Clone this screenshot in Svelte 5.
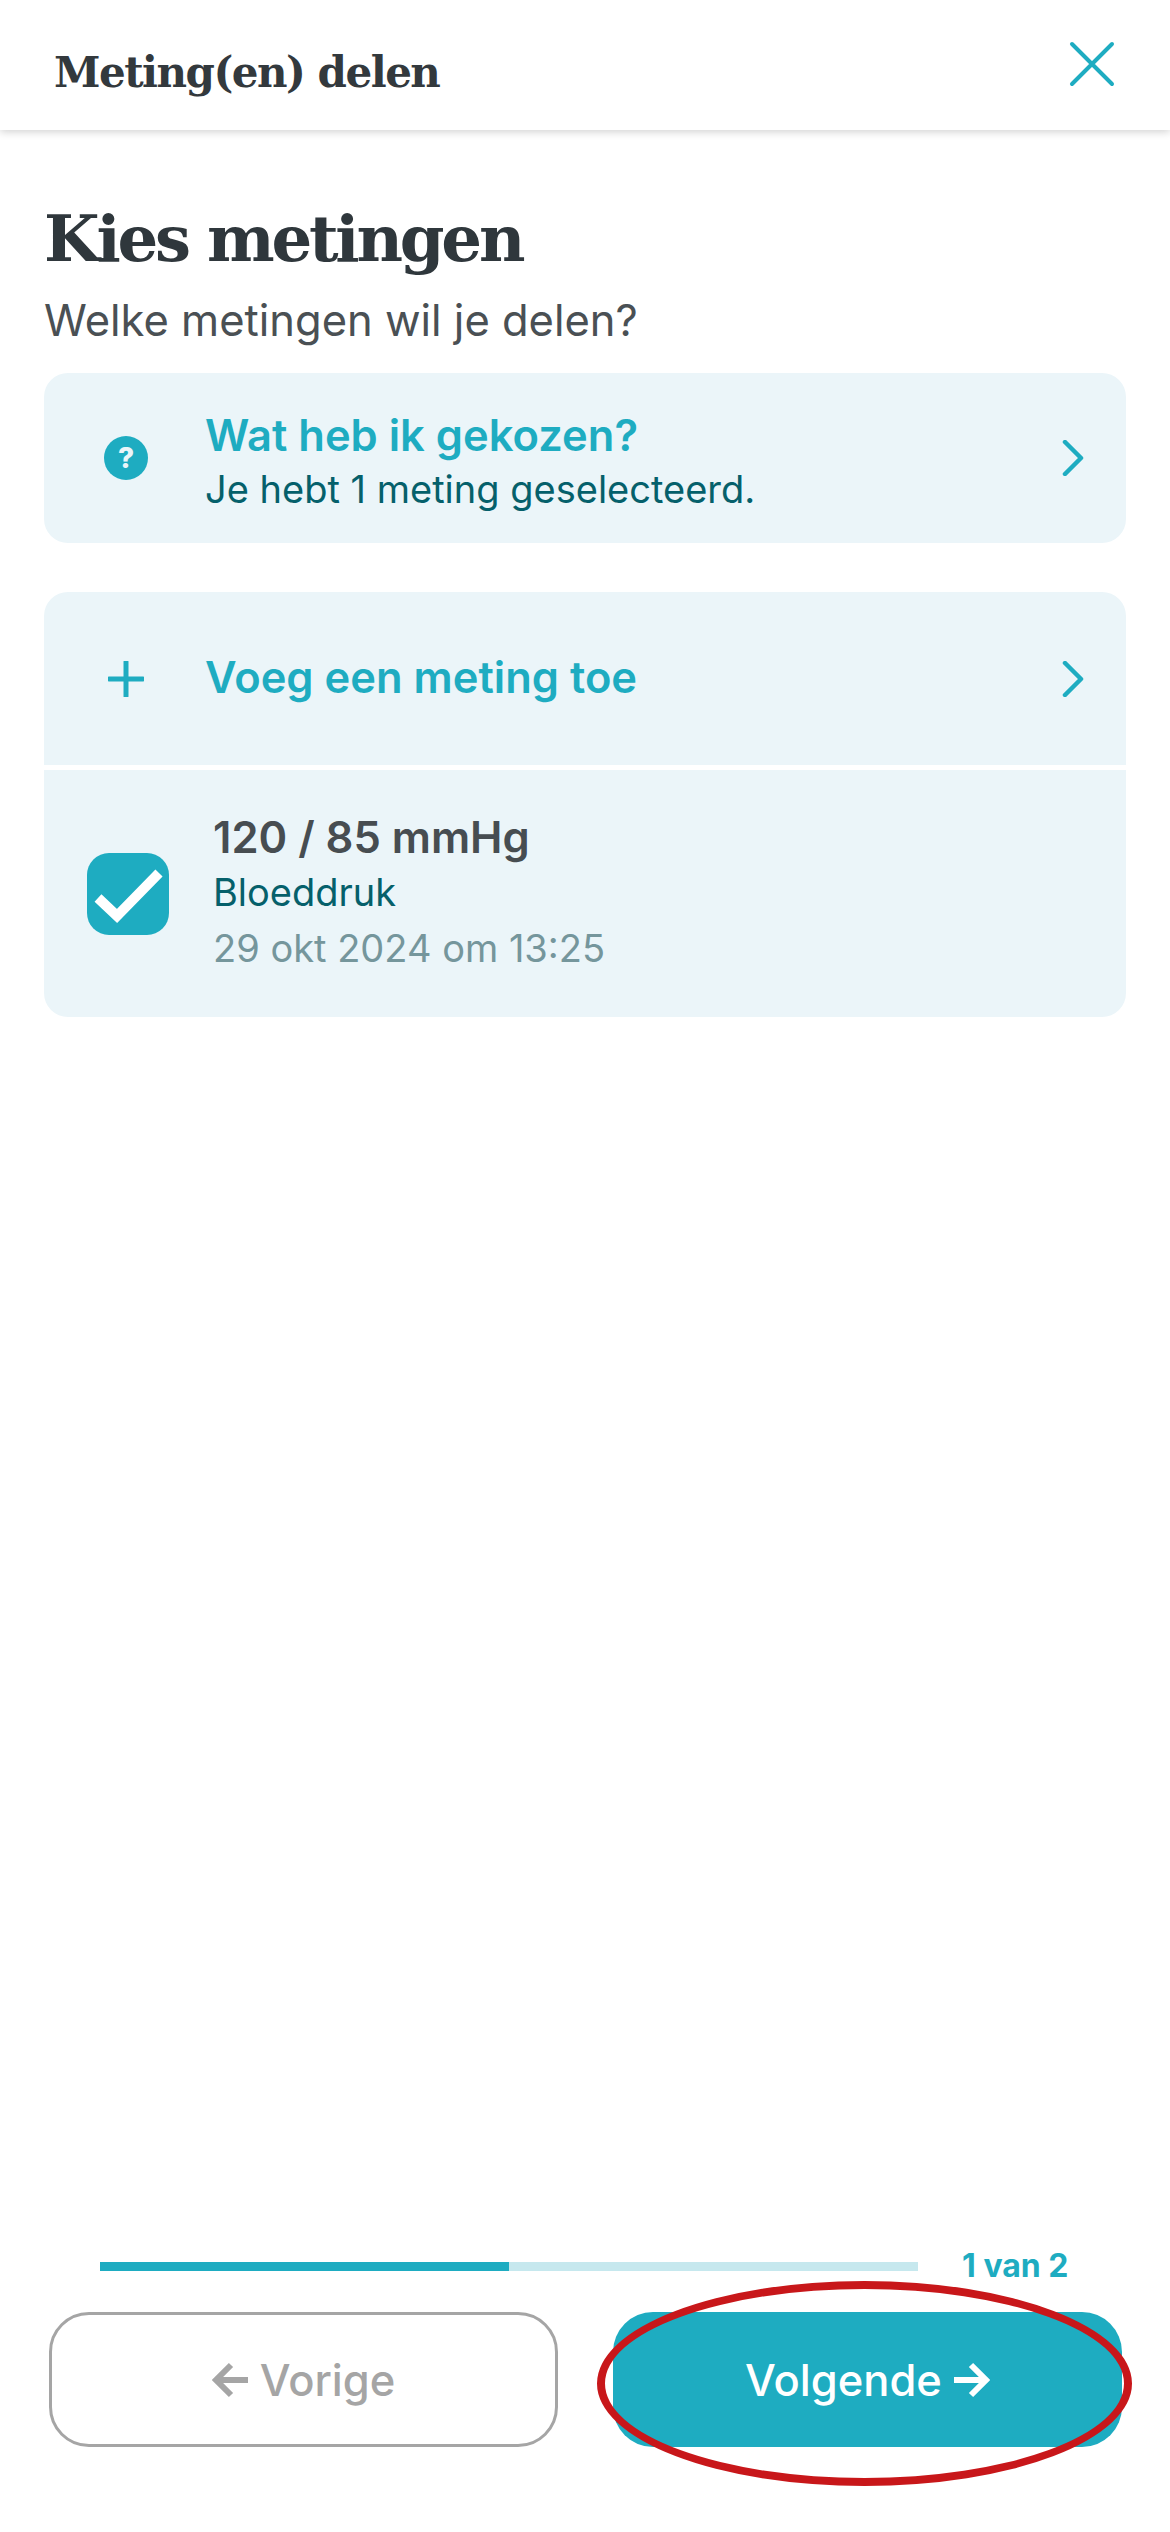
<script>
	const progress = 50;
</script>

<div class="screen">
	<header class="topbar">
		<h2>Meting(en) delen</h2>
		<button class="close" aria-label="Sluiten">
			<svg viewBox="0 0 46 46" width="46" height="46">
				<path d="M3 3 L43 43 M43 3 L3 43" fill="none" stroke="#1eacc1" stroke-width="4" stroke-linecap="round" />
			</svg>
		</button>
	</header>

	<main class="content">
		<h1>Kies metingen</h1>
		<p class="lead">Welke metingen wil je delen?</p>

		<div class="card summary">
			<span class="icon">
				<span class="help">?</span>
			</span>
			<div class="summary-text">
				<div class="link-title">Wat heb ik gekozen?</div>
				<div class="summary-sub">Je hebt 1 meting geselecteerd.</div>
			</div>
			<svg class="chevron" viewBox="0 0 22 36" width="22" height="36">
				<path d="M3 2 L19 18 L3 34" fill="none" stroke="#1eacc1" stroke-width="4.5" stroke-linecap="round" stroke-linejoin="round" />
			</svg>
		</div>

		<div class="group">
			<div class="add-row">
				<span class="icon">
					<svg viewBox="0 0 36 36" width="36" height="36">
						<path d="M18 1 V35 M1 18 H35" fill="none" stroke="#1eacc1" stroke-width="5" stroke-linecap="round" />
					</svg>
				</span>
				<div class="link-title">Voeg een meting toe</div>
				<svg class="chevron" viewBox="0 0 22 36" width="22" height="36">
					<path d="M3 2 L19 18 L3 34" fill="none" stroke="#1eacc1" stroke-width="4.5" stroke-linecap="round" stroke-linejoin="round" />
				</svg>
			</div>
			<div class="measure-row">
				<span class="check">
					<svg viewBox="0 0 82 82" width="82" height="82">
						<path d="M11 45 L30 63 L72 20" fill="none" stroke="#fff" stroke-width="10" />
					</svg>
				</span>
				<div class="measure-text">
					<div class="value">120 / 85 mmHg</div>
					<div class="kind">Bloeddruk</div>
					<div class="date">29 okt 2024 om 13:25</div>
				</div>
			</div>
		</div>
	</main>

	<footer class="footer">
		<div class="progress-row">
			<div class="track">
				<div class="fill" style="width: {progress}%"></div>
			</div>
			<span class="step">1 van 2</span>
		</div>
		<div class="buttons">
			<button class="btn prev">
				<svg viewBox="0 0 38 36" width="38" height="36">
					<path d="M36 18 H4 M19 3 L4 18 L19 33" fill="none" stroke="#a5a5a5" stroke-width="6" />
				</svg>
				Vorige
			</button>
			<div class="next-wrap">
				<button class="btn next">
					Volgende
					<svg viewBox="0 0 38 36" width="38" height="36">
						<path d="M2 18 H34 M19 3 L34 18 L19 33" fill="none" stroke="#fff" stroke-width="6" />
					</svg>
				</button>
				<div class="marker"></div>
			</div>
		</div>
	</footer>
</div>

<style>
	:global(body) {
		margin: 0;
		background: #fff;
	}
	.screen {
		width: 1170px;
		height: 2532px;
		display: flex;
		flex-direction: column;
		box-sizing: border-box;
		font-family: Inter, "Noto Sans", sans-serif;
		overflow: hidden;
	}
	.topbar {
		height: 130px;
		flex: none;
		box-sizing: border-box;
		padding: 0 55px 0 54px;
		display: flex;
		align-items: center;
		justify-content: space-between;
		background: #fff;
		box-shadow: 0 2px 8px rgba(0, 0, 0, 0.18);
	}
	.topbar h2 {
		margin: 14px 0 0;
		font-family: "DejaVu Serif", serif;
		font-size: 42px;
		font-weight: 700;
		letter-spacing: -1.5px;
		color: #33393d;
	}
	.close {
		padding: 0;
		border: 0;
		background: none;
		display: flex;
		margin-bottom: 2px;
	}
	.content {
		padding: 0 44px;
	}
	h1 {
		margin: 71px 0 0;
		font-family: "DejaVu Serif", serif;
		font-size: 64px;
		line-height: 76px;
		font-weight: 700;
		letter-spacing: -3.2px;
		color: #2f373c;
	}
	.lead {
		margin: 15px 0 0;
		font-size: 43.5px;
		line-height: 56px;
		color: #4a5054;
	}
	.card,
	.group {
		background: #ebf5f9;
		border-radius: 24px;
	}
	.summary {
		margin-top: 25px;
		height: 170px;
		display: flex;
		align-items: center;
		padding: 0 42px 0 60px;
	}
	.icon {
		width: 44px;
		flex: none;
		display: flex;
		justify-content: center;
		margin-right: 57px;
	}
	.help {
		width: 44px;
		height: 44px;
		border-radius: 50%;
		background: #1eacc1;
		color: #ebf5f9;
		font-size: 28px;
		font-weight: 800;
		line-height: 44px;
		text-align: center;
	}
	.summary-text {
		flex: 1;
		padding-top: 4px;
	}
	.link-title {
		flex: 1;
		font-size: 43.5px;
		line-height: 56px;
		font-weight: 600;
		color: #1eacc1;
	}
	.summary-sub {
		margin-top: 1px;
		font-size: 38px;
		line-height: 50px;
		color: #05606b;
	}
	.chevron {
		flex: none;
	}
	.group {
		margin-top: 49px;
		overflow: hidden;
	}
	.add-row {
		height: 173px;
		display: flex;
		align-items: center;
		padding: 0 42px 0 60px;
		border-bottom: 5px solid #fff;
	}
	.add-row .link-title {
		padding-bottom: 4px;
	}
	.measure-row {
		height: 247px;
		display: flex;
		align-items: center;
		padding-left: 43px;
	}
	.check {
		width: 82px;
		height: 82px;
		border-radius: 22px;
		background: #1eacc1;
		display: flex;
		margin-right: 44px;
	}
	.measure-text {
		padding-bottom: 4px;
	}
	.value {
		font-size: 43.5px;
		line-height: 56px;
		font-weight: 600;
		color: #474d51;
	}
	.kind {
		margin-top: 1px;
		font-size: 38px;
		line-height: 52px;
		color: #05606b;
	}
	.date {
		margin-top: 4px;
		font-size: 38px;
		line-height: 52px;
		color: #75969c;
	}
	.footer {
		margin-top: auto;
		padding: 0 48px 85px 50px;
	}
	.progress-row {
		display: flex;
		align-items: center;
		padding-left: 50px;
	}
	.track {
		width: 818px;
		height: 9px;
		background: #c6e8ee;
	}
	.fill {
		height: 100%;
		background: #1eacc1;
	}
	.step {
		margin-left: 44px;
		font-size: 32px;
		line-height: 44px;
		font-weight: 700;
		color: #1eacc1;
	}
	.buttons {
		margin-top: 24px;
		display: grid;
		grid-template-columns: 509px 509px;
		justify-content: space-between;
		margin-left: -1px;
	}
	.next-wrap {
		position: relative;
	}
	.btn {
		width: 100%;
		height: 135px;
		box-sizing: border-box;
		border-radius: 40px;
		display: flex;
		align-items: center;
		justify-content: center;
		gap: 10px;
		font-family: inherit;
		font-size: 43.5px;
		font-weight: 500;
	}
	.prev {
		border: 3px solid #a5a5a5;
		background: #fff;
		color: #a5a5a5;
	}
	.next {
		border: 0;
		background: #1eacc1;
		color: #fff;
	}
	.marker {
		position: absolute;
		left: -16px;
		top: -31px;
		width: 535px;
		height: 205px;
		box-sizing: border-box;
		border: 8px solid #c8171a;
		border-radius: 50%;
	}
</style>
